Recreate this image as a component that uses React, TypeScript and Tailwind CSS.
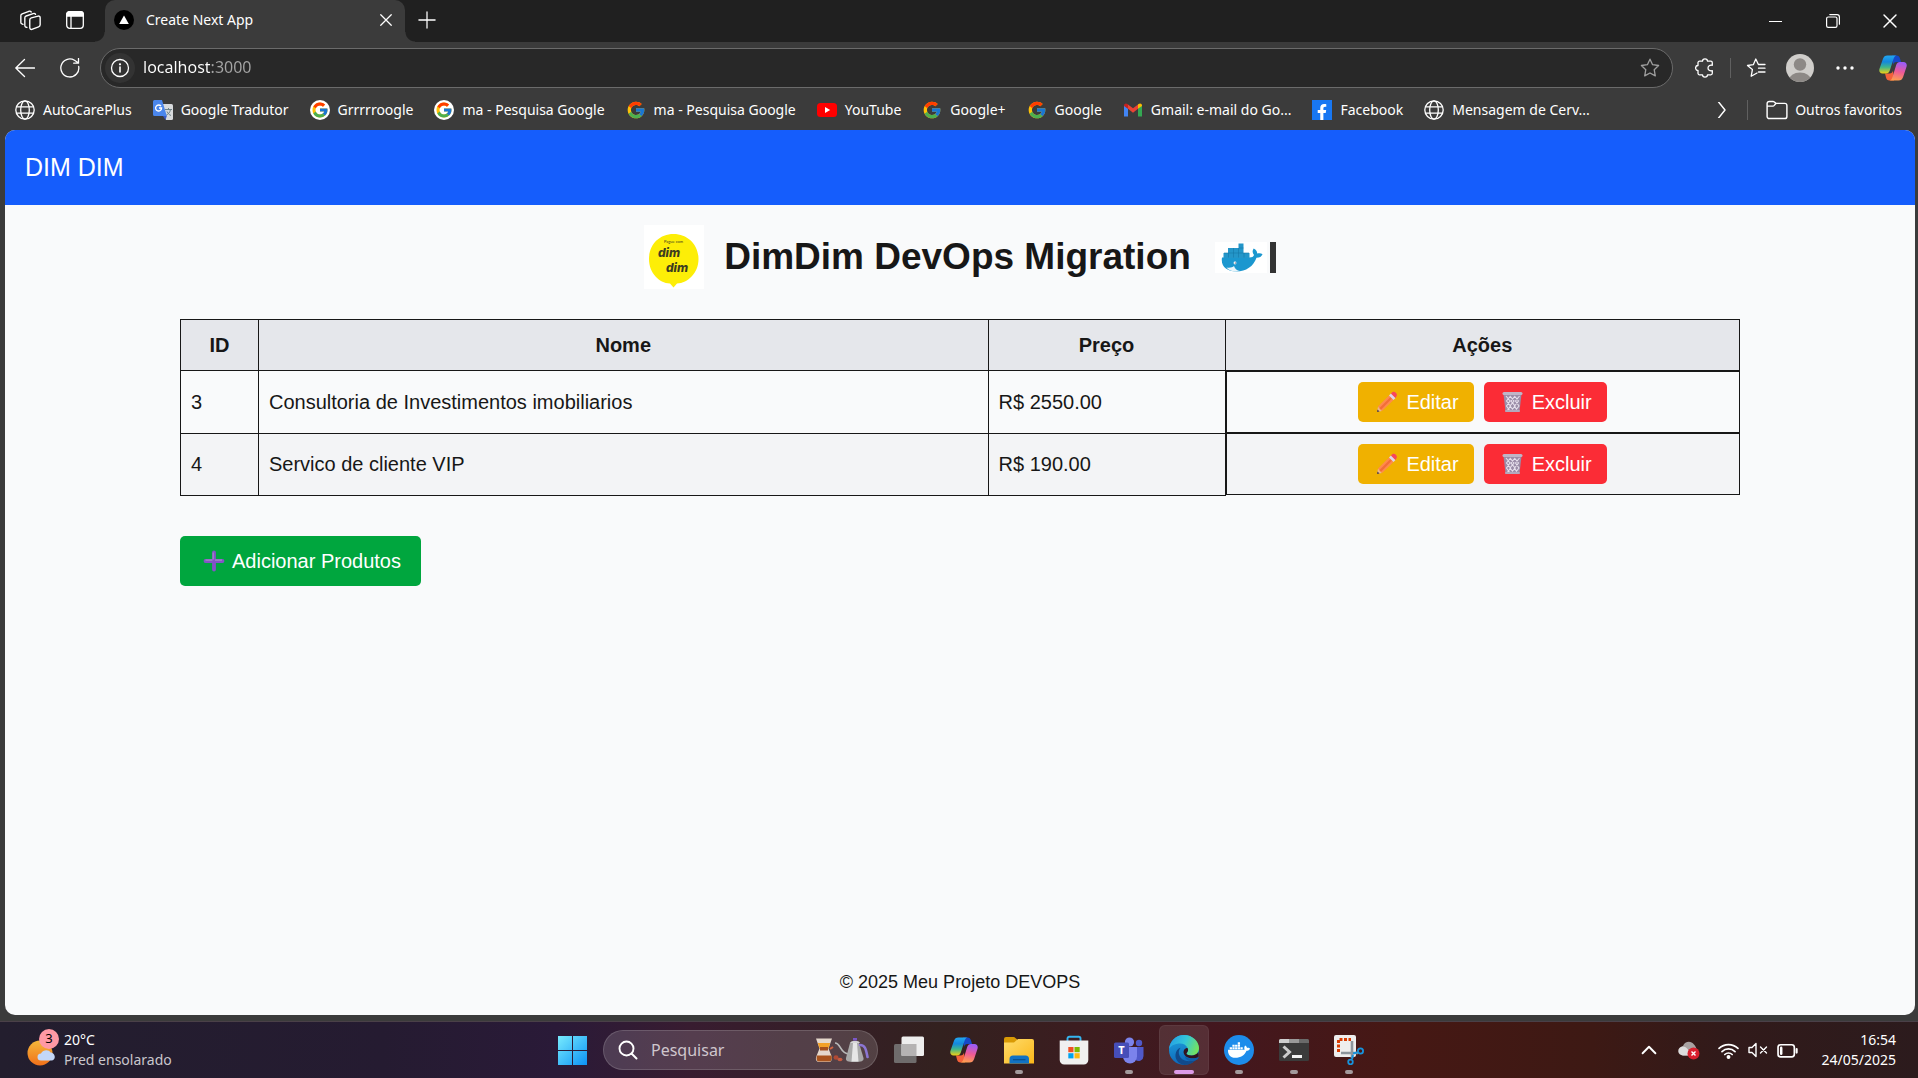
import { ReactNode } from "react";
import { FcGoogle } from "react-icons/fc";
import { FaDocker, FaFacebookF } from "react-icons/fa";

type IconProps = { className?: string };

function Line({ children, className = "size-5" }: { children: ReactNode; className?: string }) {
  return (
    <svg viewBox="0 0 20 20" className={className} fill="none" stroke="currentColor" strokeWidth="1.3" strokeLinecap="round" strokeLinejoin="round" aria-hidden="true">
      {children}
    </svg>
  );
}

const Workspaces = () => (
  <Line className="size-[21px]">
    <path d="M10.800 7.500l6.400-1.700a1.600 1.600 0 0 1 2 1.600v6.700a2 2 0 0 1-1.500 1.900l-6.400 2.500a1.600 1.600 0 0 1-2-1.500V9.500a2 2 0 0 1 1.500-2z" />
    <path d="M6.600 16.600 5.800 16.400a1.600 1.600 0 0 1-1.200-1.600V7.400c0-.8.5-1.400 1.300-1.700L12.500 3.400c1-.3 1.900 0 2.300.8" />
    <path d="M2.800 13.700 1.800 13.300A1.600 1.600 0 0 1 .8 11.800V5.400c0-.8.5-1.400 1.200-1.600L8.500 1.200c.9-.3 1.700 0 2.200.7" />
  </Line>
);
const TabPanel = () => (
  <Line className="size-5">
    <rect x="1.700" y="1.700" width="16.600" height="16.600" rx="3" />
    <path d="M1.700 6V4.500a2.800 2.800 0 0 1 2.800-2.800h11a2.800 2.800 0 0 1 2.800 2.800V6z" fill="currentColor" />
    <path d="M6 6v12" />
  </Line>
);
const Cross = ({ className = "size-[14px]" }: IconProps) => (
  <Line className={className}><path d="M2.500 2.500l15 15M17.500 2.500l-15 15" strokeWidth="1.800" /></Line>
);
const Plus = () => <Line className="size-[18px]"><path d="M10 1v18M1 10h18" strokeWidth="1.400" /></Line>;
const Back = () => <Line><path d="M19.500 10H.8M9.500 1.500L.8 10l8.700 8.500" /></Line>;
const Reload = () => <Line><path d="M18.700 8.500A9 9 0 1 1 14.500 2.300L18.500 5M18.500.5V5.200h-4.800" /></Line>;
const Info = () => <Line><circle cx="10" cy="10" r="8.500" /><path d="M10 9v5" strokeWidth="1.600" /><circle cx="10" cy="6.300" r=".5" fill="currentColor" /></Line>;
const Star = () => <Line><path d="M10 1.200l2.600 5.500 6 .8-4.400 4.200 1.100 6.200L10 15l-5.300 2.900 1.100-6.200L1.400 7.500l6-.8z" /></Line>;
const Puzzle = () => (
  <Line>
    <path d="M4.500 3.200h3C7.500 1.800 8.500.8 10 .8s2.500 1 2.500 2.400h3.300a1.500 1.500 0 0 1 1.500 1.500v2.600c-2.600-.6-4.300.7-4.300 2.700s1.700 3.300 4.300 2.700v2.600a1.500 1.500 0 0 1-1.500 1.500h-3.300c0 1.400-1 2.400-2.500 2.400s-2.500-1-2.500-2.400h-3A1.500 1.500 0 0 1 3 15.300v-2.800C1.600 12.500.6 11.400.6 10S1.600 7.500 3 7.500V4.700a1.500 1.500 0 0 1 1.500-1.500z" />
  </Line>
);
const FavList = () => <Line><path d="M11 15l-5.800 3.200 1.200-6.600L1.500 7.500l5.800-.8L9.800 1l2.600 5.500H19M12.500 10.200H19M12.500 14H19" /></Line>;
const Globe = () => (
  <Line><circle cx="10" cy="10" r="9.200" /><ellipse cx="10" cy="10" rx="4.300" ry="9.200" /><path d="M1.700 6.800h16.600M1.700 13.200h16.600" /></Line>
);
const Folder = () => <Line className="size-[22px]"><path d="M1 6.500V4.200A2 2 0 0 1 3 2.200h3.500c1 0 1.500.8 2.500 1.800h8a2 2 0 0 1 2 2v9.800a2 2 0 0 1-2 2H3a2 2 0 0 1-2-2zM1 6.500h5.500C7.500 6.500 8 5 9 4" /></Line>;
const Chevron = () => <Line className="h-4 w-5"><path d="M7 0l8 10-8 10" strokeWidth="1.800" /></Line>;

const GoogleDisc = () => (
  <span className="flex size-5 items-center justify-center rounded-full bg-white"><FcGoogle className="size-[18px]" /></span>
);
const GoogleG = () => <FcGoogle className="size-5" />;
const Translate = () => (
  <svg viewBox="0 0 20 20" className="size-5" aria-hidden="true">
    <path d="M9 4h9.500A1.500 1.500 0 0 1 20 5.500V18.500a1.500 1.500 0 0 1-1.500 1.500H13z" fill="#d7dadd" />
    <path d="M12 9.500h7M15.500 8v1.500M17.500 9.500c-.5 3-2.300 4.700-4.500 6M14 11.500c.8 2 2.200 3.200 4 4" stroke="#6d8288" fill="none" />
    <path d="M1.500 0H9l4.800 16H1.500A1.500 1.500 0 0 1 0 14.500v-13A1.500 1.500 0 0 1 1.500 0z" fill="#4a86ec" />
    <path d="M10 16h3.800L12.500 20z" fill="#3a5bc7" />
    <path d="M8 6.200A3 3 0 1 0 8.600 8H6" stroke="#fff" strokeWidth="1.300" fill="none" />
  </svg>
);
const YouTube = () => (
  <svg viewBox="0 0 20 20" className="size-5" aria-hidden="true">
    <rect x="0" y="3" width="20" height="14" rx="3.500" fill="#f00" /><path d="M8 7l5.200 3L8 13z" fill="#fff" />
  </svg>
);
const Gmail = () => (
  <svg viewBox="0 0 20 20" className="size-5" aria-hidden="true">
    <path d="M1 5v11.500h4V8.500z" fill="#4285f4" /><path d="M19 5v11.500h-4V8.500z" fill="#34a853" />
    <path d="M5 8.800V4.500l5 3.800 5-3.800v4.300l-5 3.900z" fill="#ea4335" />
    <path d="M1 5.500C1 3.500 3 2.800 4.500 4l.5.500v4.300L1 6z" fill="#c5221f" /><path d="M19 5.500c0-2-2-2.700-3.500-1.500l-.5.500v4.300L19 6z" fill="#fbbc04" />
  </svg>
);
const Facebook = () => (
  <span className="flex size-5 items-end justify-center bg-[#1877f2] text-white"><FaFacebookF className="size-4" /></span>
);
const NextLogo = () => (
  <svg viewBox="0 0 20 20" className="size-5" aria-hidden="true"><circle cx="10" cy="10" r="10" fill="#000" /><path d="M10 5.500l4.800 8.500H5.200z" fill="#fff" /></svg>
);

function Copilot({ id, className = "size-7" }: { id: string; className?: string }) {
  return (
    <svg viewBox="0 0 28 28" className={className} aria-hidden="true">
      <defs>
        <linearGradient id={id + "a"} x1="0" y1="0" x2="0" y2="1"><stop offset="0" stopColor="#22a7f0" /><stop offset=".35" stopColor="#1487dd" /><stop offset=".65" stopColor="#3fb68b" /><stop offset="1" stopColor="#f2cf13" /></linearGradient>
        <linearGradient id={id + "b"} x1=".5" y1="0" x2=".3" y2="1"><stop offset="0" stopColor="#9b5cf6" /><stop offset=".5" stopColor="#ee5a97" /><stop offset="1" stopColor="#ffa04d" /></linearGradient>
      </defs>
      <path d="M13 1.500h4.500c2 0 2.900 1 3.500 3l1 3.500h-4.500c-2 0-3 1-3.500 3z" fill="#1548c8" />
      <path d="M15 26.500h-4.500c-2 0-3-1-3.500-3L6 19.500h4.500c2 0 3-1 3.500-3z" fill="#f4613a" />
      <path d="M8.500 1.500h9C15.500 2 15 3.500 14.500 5l-3.700 11.500c-.7 2-1.800 3-3.800 3H3.500C1 19.500-.2 17.500.4 15L3.900 5c.9-2.500 2.100-3.500 4.600-3.500z" fill={"url(#" + id + "a)"} />
      <path d="M19.500 26.500h-9c2-.5 2.500-2 3-3.500L17.200 11c.7-2 1.800-3 3.800-3h3.500c2.500 0 3.700 2 3.100 4.500L24.100 23c-.9 2.500-2.100 3.500-4.600 3.500z" fill={"url(#" + id + "b)"} />
    </svg>
  );
}

const bookmarks: { label: string; icon: ReactNode }[] = [
  { label: "AutoCarePlus", icon: <Globe /> },
  { label: "Google Tradutor", icon: <Translate /> },
  { label: "Grrrrroogle", icon: <GoogleDisc /> },
  { label: "ma - Pesquisa Google", icon: <GoogleDisc /> },
  { label: "ma - Pesquisa Google", icon: <GoogleG /> },
  { label: "YouTube", icon: <YouTube /> },
  { label: "Google+", icon: <GoogleG /> },
  { label: "Google", icon: <GoogleG /> },
  { label: "Gmail: e-mail do Go...", icon: <Gmail /> },
  { label: "Facebook", icon: <Facebook /> },
  { label: "Mensagem de Cerv...", icon: <Globe /> },
];

function TabStrip() {
  return (
    <div className="flex h-[42px] items-stretch bg-[#202020]">
      <div className="flex w-[105px] items-center justify-between px-5 pb-[2px]">
        <button aria-label="Espaços de trabalho"><Workspaces /></button>
        <button aria-label="Guias verticais"><TabPanel /></button>
      </div>
      <div className="relative flex w-[300px] items-center gap-3 rounded-t-[10px] bg-[#3b3b3b] pr-3 pb-[3px] pl-[9px]">
        <span className="absolute bottom-0 -left-[10px] size-[10px] bg-[radial-gradient(circle_at_0_0,#202020_9px,#3b3b3b_10px)]" />
        <span className="absolute -right-[10px] bottom-0 size-[10px] bg-[radial-gradient(circle_at_100%_0,#202020_9px,#3b3b3b_10px)]" />
        <NextLogo />
        <span className="flex-1 text-[14px]">Create Next App</span>
        <button aria-label="Fechar guia"><Cross /></button>
      </div>
      <button aria-label="Nova guia" className="px-[13px] pb-[3px]"><Plus /></button>
      <div className="ml-auto flex items-center">
        <button aria-label="Minimizar" className="flex h-full w-[58px] items-center justify-center"><span className="h-px w-[13px] bg-white" /></button>
        <button aria-label="Restaurar" className="flex h-full w-[58px] items-center justify-center">
          <Line className="size-4"><rect x="2" y="5" width="13" height="13" rx="2" strokeWidth="1.500" /><path d="M6 2h9a3 3 0 0 1 3 3v9" strokeWidth="1.500" /></Line>
        </button>
        <button aria-label="Fechar" className="flex h-full w-[56px] items-center justify-center"><Cross className="size-4" /></button>
      </div>
    </div>
  );
}

function AddressRow() {
  return (
    <div className="flex h-[52px] items-center pr-[11px] pl-[15px]">
      <button aria-label="Voltar"><Back /></button>
      <button aria-label="Atualizar" className="ml-[25px]"><Reload /></button>
      <div className="ml-5 flex h-10 flex-1 items-center rounded-full border border-[#6b6b6b] bg-[#282828] pr-3 pl-1">
        <button aria-label="Informações do site" className="flex size-[30px] items-center justify-center rounded-full bg-[#333]"><Info /></button>
        <input
          aria-label="Endereço"
          defaultValue="localhost:3000"
          className="ml-2 h-8 min-w-0 flex-1 bg-[linear-gradient(90deg,#fff_67px,#a5a5a5_67px)] bg-clip-text pb-[2px] text-[16px] text-transparent outline-none"
        />
        <button aria-label="Favoritar" className="text-[#a0a0a0]"><Star /></button>
      </div>
      <button aria-label="Extensões" className="ml-[22px]"><Puzzle /></button>
      <span className="mx-[15px] h-5 w-px bg-[#606060]" />
      <button aria-label="Favoritos"><FavList /></button>
      <button aria-label="Perfil" className="ml-5">
        <svg viewBox="0 0 28 28" className="size-7" aria-hidden="true">
          <clipPath id="avatar"><circle cx="14" cy="14" r="14" /></clipPath>
          <g clipPath="url(#avatar)"><rect width="28" height="28" fill="#d0cecb" /><circle cx="14" cy="10.500" r="6.200" fill="#8d8986" /><ellipse cx="14" cy="26" rx="11" ry="7.500" fill="#8d8986" /></g>
        </svg>
      </button>
      <button aria-label="Mais" className="mx-[22px]">
        <svg viewBox="0 0 18 4" className="h-1 w-[18px]" fill="#fff" aria-hidden="true"><circle cx="2" cy="2" r="1.700" /><circle cx="9" cy="2" r="1.700" /><circle cx="16" cy="2" r="1.700" /></svg>
      </button>
      <button aria-label="Copilot" className="ml-[3px]"><Copilot id="bar" /></button>
    </div>
  );
}

function BookmarksRow() {
  return (
    <nav aria-label="Favoritos" className="flex h-9 items-center pr-4 pb-[5px] pl-[15px] text-[14px]">
      <div className="flex items-center gap-[21px]">
        {bookmarks.map((b, i) => (
          <a key={i} href="#" className="flex items-center gap-2 whitespace-nowrap">{b.icon}{b.label}</a>
        ))}
      </div>
      <button aria-label="Mais favoritos" className="ml-auto"><Chevron /></button>
      <span className="mr-[18px] ml-4 h-5 w-px bg-[#606060]" />
      <button className="flex items-center gap-[7px] whitespace-nowrap"><Folder />Outros favoritos</button>
    </nav>
  );
}

const DimDimLogo = () => (
  <svg viewBox="0 0 60 64" className="h-16 w-[60px] bg-white" role="img" aria-label="Dimdim">
    <path d="M29.500 9C44 9 54.500 20 54.500 34S44 58 33 58.500L29.500 62.500 26 58.500C15 58 5 48 5 34S15 9 29.500 9z" fill="#fdee07" />
    <g fill="#3d3d20" textAnchor="middle">
      <text x="29.500" y="18" fontSize="4" fontFamily="Lato, sans-serif">Pague com</text>
      <text x="25" y="32" fontSize="12" fontWeight="800" fontStyle="italic" fontFamily="Inter, sans-serif">dim</text>
      <text x="33" y="47" fontSize="12" fontWeight="800" fontStyle="italic" fontFamily="Inter, sans-serif">dim</text>
    </g>
  </svg>
);

const Whale = () => (
  <svg viewBox="0 0 52 31" className="h-[31px] w-[52px] bg-white" role="img" aria-label="Docker">
    <path d="M7 15.500h27.500c2.500 0 4-.8 4.500-2.500-1.800-2-1.800-4.500-.3-6.500 2.500 1.300 3.500 3 3.500 5 2-.6 4-.4 5.300.7-1 2.500-3 3.500-6 3.600C38.500 24.500 31 29.500 21.500 29.500 12 29.500 5.500 24.500 7 15.500z" fill="#1b97cf" />
    <path d="M8.500 11h26v5h-26zM13 6h15.500v5H13zM23.500 1.500h5V6h-5z" fill="#2496c9" />
    <path d="M13.500 11v4.500M18.500 6v9.500M23.500 6v9.500M29 11v4.500M9 11h25M24 6h4.500" stroke="#1579aa" strokeWidth=".6" />
    <path d="M11.500 25.500c3.500.6 6-.1 7.500-1.500 1 3 3 4.500 6 5-5.500 1.200-11 0-13.500-3.500z" fill="#e8f5fb" />
    <circle cx="20" cy="21" r="1.400" fill="#fff" /><circle cx="20.300" cy="21" r=".6" fill="#224" />
  </svg>
);

const Pencil = () => (
  <svg viewBox="0 0 27 22" className="h-[22px] w-[27px]" aria-hidden="true">
    <path d="M4 21l1-5.500L9 20z" fill="#e9b48f" /><path d="M4 21l.5-2.500L6.500 20.400z" fill="#4a3a3a" />
    <path d="M5 15.500L16 4.500l4.500 4.500L9 20z" fill="#ff8a4c" /><path d="M6.500 17L17.500 6l1.500 1.500L8 18.800z" fill="#f26d3a" />
    <path d="M16 4.500l2-2L22.500 7l-2 2z" fill="#ded3ee" /><path d="M18 2.500l1.300-1.200c1.200-1 2.600-.3 3.500.5s1.500 2.300.7 3.500L22.500 7z" fill="#f8445c" />
  </svg>
);
const Trash = () => (
  <svg viewBox="0 0 27 22" className="h-[22px] w-[27px]" aria-hidden="true">
    <path d="M4.500 3h18l-2 17.500h-14z" fill="#9b8da8" />
    <path d="M7 5l4 5-3.500 5 3.500 5M11 5l4 5-4 5 4 5M15.500 5l4 5-4 5 3 5M20.500 5l-4 5 3.500 5-4 5M16 5l-4 5 4 5-4 5M11.500 5l-4 5 4 5-3.500 5" stroke="#e6dfec" fill="none" strokeWidth="1.100" />
    <rect x="3.500" y="1" width="20" height="3" rx="1.500" fill="#bfb5c7" /><rect x="6" y="19" width="15" height="2" rx="1" fill="#b3a9bd" />
  </svg>
);
const PurplePlus = () => (
  <svg viewBox="0 0 27 22" className="h-[22px] w-[27px]" aria-hidden="true">
    <path d="M14 2.500v17M5.500 11h17" stroke="#8452c8" strokeWidth="3.800" strokeLinecap="round" /><path d="M13.200 2.500v7M5.500 10.200h7M15 10.200h7" stroke="#a58bc4" strokeWidth="1.200" />
  </svg>
);

const products = [
  { id: 3, name: "Consultoria de Investimentos imobiliarios", price: "R$ 2550.00" },
  { id: 4, name: "Servico de cliente VIP", price: "R$ 190.00" },
];

function Page() {
  return (
    <div className="mr-[3px] mb-[6px] ml-[5px] flex flex-1 flex-col overflow-hidden rounded-[10px] bg-gray-50 font-['Liberation_Sans',Arial,sans-serif] text-[20px] leading-[30px] text-[#171717]">
      <header className="bg-[#155dfc] p-5 text-[25px] leading-[35px] text-white">DIM DIM</header>
      <main className="mx-auto w-full max-w-[1560px] flex-1 pt-5">
        <div className="mb-[30px] flex items-center justify-center">
          <DimDimLogo />
          <h1 className="mr-6 ml-5 text-[37px] leading-[46px] font-bold">DimDim DevOps Migration</h1>
          <Whale />
          <span className="ml-[3px] h-[31px] w-[6px] bg-[#333]" />
        </div>
        <table className="w-full border-collapse">
          <thead className="bg-gray-200">
            <tr>
              <th className="w-[5%] border border-[#171717] p-[10px]">ID</th>
              <th className="border border-[#171717] p-[10px]">Nome</th>
              <th className="w-[237px] border border-[#171717] p-[10px]">Preço</th>
              <th className="w-[33%] border border-[#171717] p-[10px]">Ações</th>
            </tr>
          </thead>
          <tbody>
            {products.map((p) => (
              <tr key={p.id} className="even:bg-gray-100">
                <td className="border border-[#171717] p-[10px]">{p.id}</td>
                <td className="border border-[#171717] p-[10px]">{p.name}</td>
                <td className="border border-[#171717] p-[10px]">{p.price}</td>
                <td className="flex justify-center gap-[10px] border border-[#171717] p-[10px]">
                  <button className="flex items-center gap-[6px] rounded-[5px] bg-[#f0b100] px-[15px] py-[5px] text-white"><Pencil />Editar</button>
                  <button className="flex items-center gap-[6px] rounded-[5px] bg-[#fb2c36] px-[15px] py-[5px] text-white"><Trash />Excluir</button>
                </td>
              </tr>
            ))}
          </tbody>
        </table>
        <button className="mt-10 flex items-center gap-[5px] rounded-[5px] bg-[#00a63e] px-5 py-[10px] text-white"><PurplePlus />Adicionar Produtos</button>
      </main>
      <footer className="p-5 text-center text-[18px] leading-[25px]">© 2025 Meu Projeto DEVOPS</footer>
    </div>
  );
}

const Explorer = () => (
  <svg viewBox="0 0 30 30" className="size-[30px]" aria-hidden="true">
    <defs><linearGradient id="fold" x1="0" y1="0" x2="1" y2="1"><stop stopColor="#ffdc6b" /><stop offset="1" stopColor="#fbb71a" /></linearGradient></defs>
    <path d="M0 4a2 2 0 0 1 2-2h7.500c1.500 0 2.500 2 3.500 2v5H0z" fill="#d99a05" />
    <path d="M0 7.500h10L14 4h14a2 2 0 0 1 2 2v22.500H0z" fill="url(#fold)" />
    <path d="M5.500 28.500V24a3.500 3.500 0 0 1 3.500-3.500h12.500A3.500 3.500 0 0 1 25 24v4.500z" fill="#1272c4" /><path d="M9 24.700h12.500" stroke="#0b4f8e" strokeWidth="1.200" />
  </svg>
);
const Store = () => (
  <svg viewBox="0 0 30 30" className="size-[30px]" aria-hidden="true">
    <path d="M8.500 6V3.500A1.800 1.800 0 0 1 10.300 1.700h9.400A1.800 1.800 0 0 1 21.500 3.500V6" fill="none" stroke="#35b5ee" strokeWidth="1.900" />
    <path d="M.7 5.500h28.600V25a4.500 4.500 0 0 1-4.500 4.500H5.200A4.500 4.500 0 0 1 .7 25z" fill="#f0f0f0" />
    <path d="M9.300 12h5.200v5.200H9.300z" fill="#f05023" /><path d="M15.500 12h5.200v5.200h-5.200z" fill="#7fba00" /><path d="M9.300 18.200h5.200v5.200H9.300z" fill="#00a3ee" /><path d="M15.500 18.200h5.200v5.200h-5.200z" fill="#fdb813" />
  </svg>
);
const Teams = () => (
  <svg viewBox="0 0 30 30" className="size-[30px]" aria-hidden="true">
    <circle cx="25" cy="8" r="3.200" fill="#5059c9" /><path d="M20 12h9.500v9a5 5 0 0 1-8 4z" fill="#5059c9" />
    <circle cx="15.500" cy="7" r="4.600" fill="#7b83eb" /><path d="M9 12h14v9.500a7 7 0 0 1-14 0z" fill="#7b83eb" />
    <rect y="7.500" width="15" height="15.500" rx="1.500" fill="#464eb8" /><text x="7.500" y="19" textAnchor="middle" fontSize="11" fontWeight="700" fill="#fff" fontFamily="Noto Sans, sans-serif">T</text>
  </svg>
);
const Edge = () => (
  <svg viewBox="0 0 30 30" className="size-[30px]" aria-hidden="true">
    <defs>
      <linearGradient id="e1" x1="0" y1=".3" x2="1" y2=".6"><stop stopColor="#249fe6" /><stop offset=".5" stopColor="#34c6d8" /><stop offset="1" stopColor="#77e35b" /></linearGradient>
      <linearGradient id="e2" x1=".3" y1="0" x2=".5" y2="1"><stop stopColor="#1fa2de" /><stop offset="1" stopColor="#0c64b7" /></linearGradient>
    </defs>
    <circle cx="15" cy="15" r="15" fill="url(#e2)" />
    <path d="M0 14C1 6 7 0 15 0c8.500 0 15 6.500 15 13 0 5-3.500 7.500-7.500 7.500-3.500 0-5.300-1.300-5-2.200 1.500-1.800 2-3.500 1-5.500C17 9.500 13.500 8 9.500 8.500 5 9 1.500 11 0 14z" fill="url(#e1)" />
    <path d="M11.500 12.800c-4 5-.5 12.200 6 13.200 4 .6 7.500-.5 11-3.500C26 27 21 30 15.500 30 9 29 6 24 6.500 19.500c.4-3.500 2.500-6 5-6.700z" fill="#114a8b" />
    <path d="M18.500 13c1.200 2 .5 3.700-1 5.300-.4 1.200 1.500 2.200 5 2.200 3 0 5.500-1.200 6.800-3.500.3 2 .2 4-.8 5.500-6 2-12.500.5-13.800-4.500-.5-2.500 1-5 3.800-5z" fill="#32131f" />
    <path d="M16 21c2.500 3 8 4 13 1.200 1.300-.7.700.8-.3 2-4.500 3.500-12.700 2-12.700-3.200z" fill="#0f5ca8" />
  </svg>
);
const DockerApp = () => (
  <span className="flex size-[30px] items-center justify-center rounded-full bg-[#1d8ceb] text-white"><FaDocker className="size-[22px]" /></span>
);
const Terminal = () => (
  <svg viewBox="0 0 30 30" className="size-[30px]" aria-hidden="true">
    <rect y="4" width="30" height="22" rx="1.500" fill="#3b3b3b" /><path d="M0 8V5.500A1.500 1.500 0 0 1 1.500 4H10v4z" fill="#cfcfcf" /><path d="M10 4h10v4H10z" fill="#999" /><path d="M20 4h8.500A1.500 1.500 0 0 1 30 5.500V8H20z" fill="#6a6a6a" />
    <path d="M4.500 11.500L10.500 17l-6 5.500" fill="none" stroke="#ccc" strokeWidth="3" /><path d="M13 20h10v3H13z" fill="#f3f3f3" />
  </svg>
);
const Snip = () => (
  <svg viewBox="0 0 30 30" className="size-[30px]" aria-hidden="true">
    <rect width="22" height="22" rx="2" fill="#eee" /><path d="M4.500 17V4.500H17" fill="none" stroke="#d83b01" strokeWidth="3" strokeDasharray="3 1.500" />
    <path d="M18 6v17M7 18h17" stroke="#8c959c" strokeWidth="2.600" /><circle cx="26.500" cy="16" r="2.600" fill="none" stroke="#1793dc" strokeWidth="1.800" /><circle cx="16.500" cy="27" r="2.300" fill="none" stroke="#1793dc" strokeWidth="1.800" /><path d="M18 24l1-4M23 17.500l-4 1" stroke="#1793dc" strokeWidth="2" />
  </svg>
);
const TaskView = () => (
  <svg viewBox="0 0 30 30" className="size-[30px]" aria-hidden="true">
    <rect y="9" width="22.500" height="19" rx="1.500" fill="#6f6c6c" /><rect x="7.500" y="1.500" width="22.500" height="19.500" rx="1.500" fill="#eee" /><path d="M7.500 9H22.500v12h-15z" fill="#b5b3b3" />
  </svg>
);
const CoffeeArt = () => (
  <svg viewBox="0 0 54 26" className="h-[26px] w-[54px]" aria-hidden="true">
    <path d="M1 1.500h16l-3.500 10 3 7.500c1 4-.5 6-2.500 6H4c-2.500 0-4-2.500-2.500-6l3-7.500z" fill="#e5d8cc" />
    <path d="M2.800 6h12.400l-1.700 5.500h-9z" fill="#f4a127" /><rect x="5" y="10" width="8" height="3.500" fill="#a6501c" /><path d="M2 18.500h14.500c1 4-.5 6-2.500 6H4c-2 0-3-2-2-6z" fill="#a9541e" />
    <path d="M15 12l3-2" stroke="#d26443" strokeWidth="2" /><ellipse cx="21" cy="20.500" rx="2.500" ry="2.200" fill="#b04a35" /><ellipse cx="25" cy="22.500" rx="2.500" ry="1.800" fill="#c85b42" />
    <path d="M20 6c6 0 5 11 14 11" stroke="#b9b9b9" strokeWidth="1.700" fill="none" />
    <path d="M35 6h9l4.500 15c.5 3-2 4-9 4s-9-1-8.500-4z" fill="#a9a9a9" /><path d="M38 6h4l1.500 18.500h-7z" fill="#e6e6e6" /><path d="M35 6c1-3 9-3 10 0z" fill="#d5d5d5" /><path d="M38 1h4v2.500h-4z" fill="#7b57c8" />
    <path d="M45 8c5 0 6 4 7.500 12" stroke="#8b76d3" strokeWidth="2.600" fill="none" strokeLinecap="round" />
  </svg>
);

const apps: { name: string; icon: ReactNode; state: "idle" | "open" | "active" }[] = [
  { name: "Visão de tarefas", icon: <TaskView />, state: "idle" },
  { name: "Copilot", icon: <Copilot id="task" />, state: "idle" },
  { name: "Explorador de Arquivos", icon: <Explorer />, state: "open" },
  { name: "Microsoft Store", icon: <Store />, state: "idle" },
  { name: "Teams", icon: <Teams />, state: "open" },
  { name: "Edge", icon: <Edge />, state: "active" },
  { name: "Docker", icon: <DockerApp />, state: "open" },
  { name: "Terminal", icon: <Terminal />, state: "open" },
  { name: "Captura", icon: <Snip />, state: "open" },
];

function Taskbar() {
  return (
    <div className="flex h-[57px] items-center border-t border-[#4a4048] bg-[linear-gradient(90deg,#231e2e_0%,#251b31_20%,#2a1a38_29%,#381c30_36%,#33211f_49%,#3b1d20_56%,#43171f_63%,#461814_73%,#3d1914_83%,#311a1a_90%,#2c1b1d_100%)]">
      <div className="flex flex-1 items-center">
        <button className="flex items-center gap-2 pl-[26px] text-left">
          <span className="relative">
            <svg viewBox="0 0 30 36" className="h-9 w-[30px]" aria-hidden="true">
              <defs><linearGradient id="sun" x1="0" y1="0" x2="0" y2="1"><stop stopColor="#f5b83b" /><stop offset="1" stopColor="#f0701a" /></linearGradient></defs>
              <circle cx="14" cy="21" r="12.500" fill="url(#sun)" /><path d="M15 28.500a3.500 3.500 0 0 1 0-7c2-4 8-4 9.500-1 5 0 6 8 1 8z" fill="#c3d7f8" />
            </svg>
            <span className="absolute -top-[3px] -right-[3px] flex size-5 items-center justify-center rounded-full bg-[#ff99a4] text-[13px] text-black">3</span>
          </span>
          <span className="text-[14px] leading-5 whitespace-nowrap">20°C<br /><span className="text-[#c9c6cc]">Pred ensolarado</span></span>
        </button>
      </div>
      <nav aria-label="Barra de tarefas" className="flex items-center gap-[3px] pl-[3px]">
        <button aria-label="Iniciar" className="flex w-[55px] justify-center">
          <svg viewBox="0 0 29 29" className="size-[29px]" aria-hidden="true">
            <defs><linearGradient id="win" gradientUnits="userSpaceOnUse" x1="0" y1="0" x2="29" y2="29"><stop stopColor="#78ebfd" /><stop offset="1" stopColor="#0c92f5" /></linearGradient></defs>
            <path d="M0 0h14v14H0zM15 0h14v14H15zM0 15h14v14H0zM15 15h14v14H15z" fill="url(#win)" />
          </svg>
        </button>
        <label className="flex h-10 w-[275px] items-center gap-[13px] rounded-full border border-white/15 bg-white/15 pr-2 pl-[14px]">
          <Line className="size-5"><circle cx="8.500" cy="8.500" r="7" strokeWidth="1.900" /><path d="M13.500 13.500l5 5" strokeWidth="2" /></Line>
          <input aria-label="Pesquisar" placeholder="Pesquisar" className="min-w-0 flex-1 bg-transparent text-[16px] outline-none placeholder:text-[#cfc6cd]" />
          <CoffeeArt />
        </label>
        <div className="flex">
          {apps.map((a) => (
            <button key={a.name} aria-label={a.name} className="flex w-[55px] justify-center">
              <span className={a.state === "active" ? "relative flex size-[50px] items-center justify-center rounded-[6px] border border-white/5 bg-white/10" : "relative flex size-[50px] items-center justify-center"}>
                {a.icon}
                {a.state !== "idle" && (
                  <span className={a.state === "active" ? "absolute bottom-0 h-1 w-5 rounded-full bg-[#dc9be8]" : "absolute bottom-[1px] h-1 w-2 rounded-full bg-[#a39a9c]"} />
                )}
              </span>
            </button>
          ))}
        </div>
      </nav>
      <div className="flex flex-1 items-center justify-end">
        <button aria-label="Ícones ocultos"><Line className="size-4"><path d="M2 14l8-8 8 8" strokeWidth="2.400" /></Line></button>
        <button aria-label="OneDrive" className="ml-[21px]">
          <svg viewBox="0 0 22 20" className="h-5 w-[22px]" aria-hidden="true">
            <path d="M5 15.500a5 5 0 0 1 0-9.500c2-5 8-5.500 11-1.500 3 3 5 11 0 11z" fill="#a8a2a2" /><path d="M5 15.500a4.500 4.500 0 0 1-.5-9c4 0 6 3 9 9z" fill="#ddd" />
            <circle cx="15.500" cy="13.500" r="6" fill="#d9202e" /><path d="M13.500 11.500l4 4M17.500 11.500l-4 4" stroke="#fff" strokeWidth="1.400" />
          </svg>
        </button>
        <button aria-label="Rede, som e bateria" className="ml-[18px] flex items-center gap-[9px]">
          <Line className="size-[21px]"><path d="M1 8a13 13 0 0 1 18 0M3.800 11a9 9 0 0 1 12.400 0M6.500 13.800a5 5 0 0 1 7 0" strokeWidth="1.600" /><circle cx="10" cy="16.200" r="1.200" fill="currentColor" /></Line>
          <Line className="size-5"><path d="M1 7.500v5h3l4 4v-13l-4 4zM12.500 7l6 6M18.500 7l-6 6" strokeWidth="1.400" /></Line>
          <Line className="size-[21px]"><rect x="1" y="4.500" width="15.500" height="11.500" rx="2.500" strokeWidth="1.600" /><path d="M4 7.500v5.500" strokeWidth="2.400" /><path d="M18.700 8.500v3.500" strokeWidth="2" /></Line>
        </button>
        <button className="pr-[22px] pl-6 text-right text-[14px] leading-5 whitespace-nowrap">16:54<br />24/05/2025</button>
      </div>
    </div>
  );
}

export default function App() {
  return (
    <div className="flex min-h-screen flex-col bg-[#3b3b3b] font-['Noto_Sans','Open_Sans',sans-serif] text-white">
      <TabStrip />
      <AddressRow />
      <BookmarksRow />
      <Page />
      <Taskbar />
    </div>
  );
}
